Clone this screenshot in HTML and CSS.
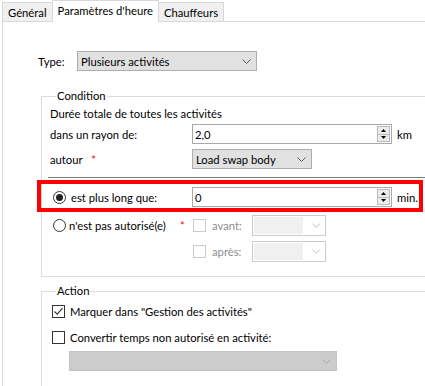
FILE: index.html
```html
<!DOCTYPE html>
<html lang="fr">
  <head>
    <meta charset="UTF-8" />
    <meta name="viewport" content="width=device-width, initial-scale=1.0" />
    <title>Paramètres d'heure</title>
    <link rel="stylesheet" href="styles.css">
  </head>
  <body>
    <!-- onglets -->
    <div class="tabs">
      <div class="tab">Général</div>
      <div class="tab active">Paramètres d'heure</div>
      <div class="tab">Chauffeurs</div>
    </div>

    <div class="panel">
      <div class="type-row">
        <span class="type-label">Type:</span>
        <div class="combo type-combo">
          <span class="combo-text">Plusieurs activités</span>
          <svg class="chev" width="9" height="5" viewBox="0 0 9 5"><path d="M0.5 0.5 L4.5 4.5 L8.5 0.5" fill="none" stroke="#555" /></svg>
        </div>
      </div>

      <!-- Condition -->
      <fieldset class="group cond">
        <legend>Condition</legend>
        <div class="line">Durée totale de toutes les activités</div>

        <div class="row r-rayon">
          <span class="lbl">dans un rayon de:</span>
          <div class="spin">
            <span class="val">2,0</span>
            <span class="spin-btns">
              <span class="sb"><svg width="5" height="3" viewBox="0 0 5 3"><path d="M0 3 L2.5 0 L5 3 Z" fill="#000" /></svg></span>
              <span class="sb"><svg width="5" height="3" viewBox="0 0 5 3"><path d="M0 0 L2.5 3 L5 0 Z" fill="#000" /></svg></span>
            </span>
          </div>
          <span class="unit">km</span>
        </div>

        <div class="row r-autour">
          <span class="lbl">autour <span class="req">*</span></span>
          <div class="combo load-combo">
            <span class="combo-text">Load swap body</span>
            <svg class="chev" width="9" height="5" viewBox="0 0 9 5"><path d="M0.5 0.5 L4.5 4.5 L8.5 0.5" fill="none" stroke="#555" /></svg>
          </div>
        </div>

        <div class="sep"></div>

        <div class="row r-long">
          <div class="highlight"></div>
          <span class="radio checked"></span>
          <span class="lbl2">est plus long que:</span>
          <div class="spin">
            <span class="val">0</span>
            <span class="spin-btns">
              <span class="sb"><svg width="5" height="3" viewBox="0 0 5 3"><path d="M0 3 L2.5 0 L5 3 Z" fill="#000" /></svg></span>
              <span class="sb"><svg width="5" height="3" viewBox="0 0 5 3"><path d="M0 0 L2.5 3 L5 0 Z" fill="#000" /></svg></span>
            </span>
          </div>
          <span class="unit">min.</span>
        </div>

        <div class="row r-auth">
          <span class="radio"></span>
          <span class="lbl3">n'est pas autorisé(e)</span>
          <span class="req req-auth">*</span>
          <span class="check dis"></span>
          <span class="dis-text">avant:</span>
          <div class="combo dis-combo">
            <span class="dis-fill"></span>
            <svg class="chev" width="9" height="5" viewBox="0 0 9 5"><path d="M0.5 0.5 L4.5 4.5 L8.5 0.5" fill="none" stroke="#bcbcbc" /></svg>
          </div>
        </div>

        <div class="row r-apres">
          <span class="check dis"></span>
          <span class="dis-text">après:</span>
          <div class="combo dis-combo">
            <span class="dis-fill"></span>
            <svg class="chev" width="9" height="5" viewBox="0 0 9 5"><path d="M0.5 0.5 L4.5 4.5 L8.5 0.5" fill="none" stroke="#bcbcbc" /></svg>
          </div>
        </div>
      </fieldset>

      <!-- Action -->
      <fieldset class="group action">
        <legend>Action</legend>
        <div class="crow c-mark">
          <span class="check on">
            <svg width="11" height="11" viewBox="0 0 11 11"><path d="M1.5 5.5 L4.2 8.2 L9.5 2.2" fill="none" stroke="#333" stroke-width="1.1" /></svg>
          </span>
          <span>Marquer dans "Gestion des activités"</span>
        </div>
        <div class="crow c-conv">
          <span class="check"></span>
          <span>Convertir temps non autorisé en activité:</span>
        </div>
        <div class="combo act-combo">
          <svg class="chev" width="9" height="5" viewBox="0 0 9 5"><path d="M0.5 0.5 L4.5 4.5 L8.5 0.5" fill="none" stroke="#a8a8a8" /></svg>
        </div>
      </fieldset>
    </div>
  </body>
</html>
```

FILE: styles.css
```css
html, body {
  margin: 0;
  overflow: hidden;
}
body {
  background: #fff;
  font-family: Lato, "Noto Sans", sans-serif;
  font-size: 11.25px;
  color: #000;
  width: 425px;
  height: 386px;
}

/* onglets */
.tabs {
  display: flex;
  align-items: flex-end;
  height: 21px;
  padding-left: 2px;
}
.tab {
  height: 19px;
  line-height: 19px;
  padding: 0 5px;
  background: #f0f0f0;
  border: 1px solid #d9d9d9;
  border-bottom: none;
  margin-left: -1px;
  box-sizing: border-box;
  white-space: nowrap;
}
.tab:first-child {
  margin-left: 0;
}
.tab.active {
  height: 22px;
  line-height: 20px;
  background: #fff;
  margin-bottom: -1px;
  position: relative;
  z-index: 1;
}

.panel {
  border-top: 1px solid #d9d9d9;
  border-left: 1px solid #d9d9d9;
  margin-left: 2px;
  height: 364px;
  padding-left: 35px;
  overflow: hidden;
}

.type-row {
  display: flex;
  align-items: center;
  margin-top: 29px;
  height: 20px;
}
.type-label {
  width: 39px;
}

.combo {
  display: flex;
  align-items: center;
  box-sizing: border-box;
  height: 20px;
  background: #e1e1e1;
  border: 1px solid #adadad;
  padding-left: 3px;
  position: relative;
}
.combo-text {
  flex: 1;
  white-space: nowrap;
}
.combo .chev {
  margin-right: 5px;
}
.type-combo {
  width: 180px;
}
.load-combo {
  width: 120px;
}

/* groupes */
.group {
  margin: 17px 0 0 3px;
  padding: 0 0 0 8px;
  border: 1px solid #dcdcdc;
  border-right: none;
  min-width: 0;
}
.group legend {
  padding: 0 1px;
  margin-left: 6px;
  line-height: 16px;
  height: 16px;
}
.cond {
  padding-bottom: 14px;
  position: relative;
}
.line {
  line-height: 16px;
  margin-top: 2px;
}

.row {
  display: flex;
  align-items: center;
  position: relative;
}
.lbl {
  width: 142px;
  white-space: nowrap;
}
.req {
  color: #f00;
  margin-left: 6px;
}
.r-rayon {
  margin-top: 2px;
  height: 20px;
}
.r-autour {
  margin-top: 5px;
  height: 20px;
}

.spin {
  display: flex;
  align-items: center;
  box-sizing: border-box;
  width: 200px;
  height: 20px;
  border: 1px solid #a9a9a9;
  background: #fff;
  padding-left: 2px;
  flex-shrink: 0;
}
.spin .val {
  flex: 1;
}
.spin-btns {
  display: flex;
  flex-direction: column;
  width: 13px;
  height: 16px;
  margin-right: 1px;
  border: 1px solid #b9b9b9;
  box-sizing: border-box;
}
.sb {
  flex: 1;
  display: flex;
  align-items: center;
  justify-content: center;
  background: #ececec;
}
.sb + .sb {
  border-top: 1px solid #b9b9b9;
}
.unit {
  margin-left: 5px;
  white-space: nowrap;
}

.sep {
  height: 1px;
  background: #7d7d7d;
  margin: 8px 0 0 -2px;
}

.r-long {
  margin-top: 9px;
  height: 20px;
}
.highlight {
  position: absolute;
  left: -13px;
  top: -7px;
  width: 386px;
  height: 32px;
  box-sizing: border-box;
  border: 4px solid #f00;
}

.radio {
  width: 13px;
  height: 13px;
  box-sizing: border-box;
  border: 1px solid #333;
  border-radius: 50%;
  margin-left: 3px;
  display: flex;
  align-items: center;
  justify-content: center;
  flex-shrink: 0;
}
.radio.checked::after {
  content: "";
  width: 7px;
  height: 7px;
  border-radius: 50%;
  background: #222;
}
.lbl2 {
  width: 121px;
  margin-left: 5px;
  white-space: nowrap;
}
.lbl3 {
  margin-left: 3px;
  white-space: nowrap;
  width: 109px;
}
.req-auth {
  margin-left: 0;
  padding-left: 2px;
  width: 13px;
  flex-shrink: 0;
}

.check {
  width: 13px;
  height: 13px;
  box-sizing: border-box;
  border: 1px solid #333;
  background: #fff;
  display: flex;
  align-items: center;
  justify-content: center;
  flex-shrink: 0;
}
.check.dis {
  border-color: #cccccc;
}
.dis-text {
  color: #8d8d8d;
  margin-left: 6px;
  width: 40px;
  flex-shrink: 0;
}
.dis-combo {
  width: 74px;
  height: 21px;
  background: #fff;
  border-color: #cccccc;
  padding-left: 1px;
  flex-shrink: 0;
}
.dis-fill {
  width: 52px;
  height: 17px;
  background: #f0f0f0;
  margin-right: 9px;
}

.r-auth {
  margin-top: 8px;
  height: 21px;
}
.r-apres {
  margin-top: 5px;
  height: 21px;
  padding-left: 143px;
}

/* action */
.action {
  margin-top: 6px;
  padding-bottom: 40px;
}
.crow {
  display: flex;
  align-items: center;
  height: 16px;
  padding-left: 2px;
  white-space: nowrap;
}
.crow .check {
  margin-right: 5px;
}
.c-mark {
  margin-top: 4px;
}
.c-conv {
  margin-top: 10px;
}
.act-combo {
  margin: 6px 0 0 19px;
  width: 268px;
  background: #cccccc;
  border-color: #c4c4c4;
  justify-content: flex-end;
}
```
